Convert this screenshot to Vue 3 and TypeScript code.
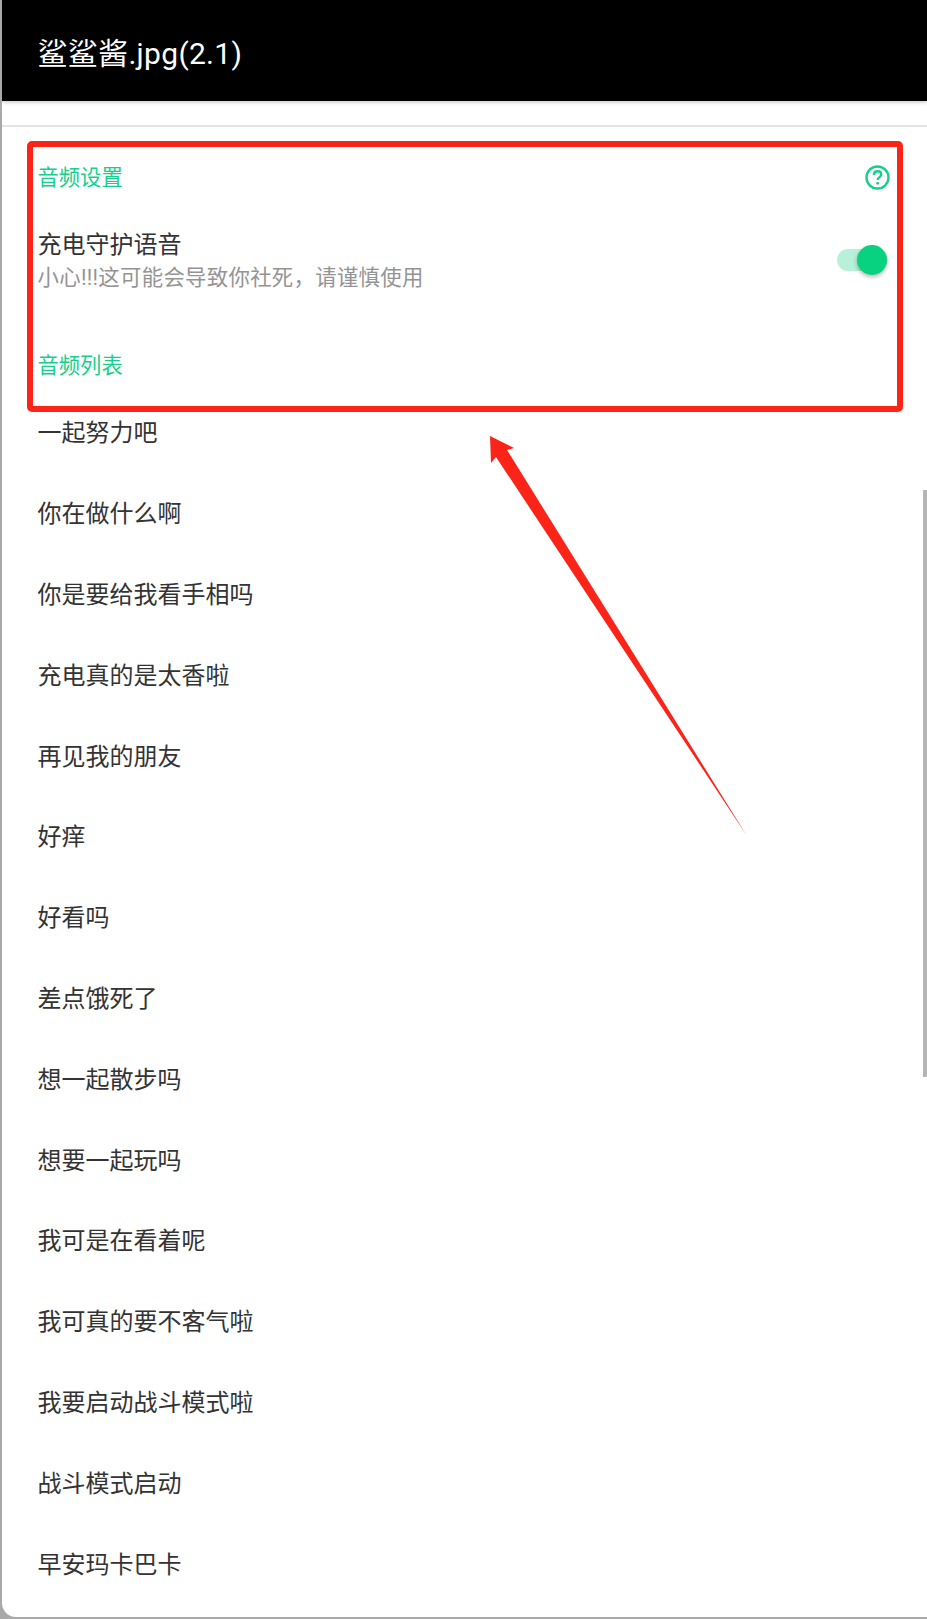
<template>
  <div class="window">
    <header class="app-bar">
      <h1 class="app-title">鲨鲨酱.jpg(2.1)</h1>
    </header>
    <div class="tab-gap" />

    <main class="content">
      <section class="settings">
        <div class="section-head">
          <span class="section-title">音频设置</span>
          <svg class="help" viewBox="0 0 25 25" aria-hidden="true">
            <circle cx="12.5" cy="12.5" r="11" />
            <path d="M8.9 10c0-2.2 1.6-3.7 3.7-3.7s3.6 1.4 3.6 3.2c0 2.7-3.5 2.7-3.5 5.6" />
            <circle class="dot" cx="12.7" cy="18.3" r="1.4" />
          </svg>
        </div>
        <div class="switch-row">
          <div class="switch-text">
            <div class="switch-title">充电守护语音</div>
            <div class="switch-sub">小心!!!这可能会导致你社死，请谨慎使用</div>
          </div>
          <div class="switch">
            <span class="thumb" />
          </div>
        </div>
        <div class="list-head">
          <span class="section-title">音频列表</span>
        </div>
      </section>

      <ul class="audio-list">
        <li v-for="item in audios" :key="item" class="audio-item">{{ item }}</li>
      </ul>
    </main>

    <div class="scrollbar" />
    <div class="highlight" />
    <svg class="arrow" viewBox="0 0 927 1619" aria-hidden="true">
      <polygon points="490,436 514,448 507,450 747,836 496,457 491,463" />
    </svg>
  </div>
</template>

<script setup lang="ts">
const audios: string[] = [
  '一起努力吧',
  '你在做什么啊',
  '你是要给我看手相吗',
  '充电真的是太香啦',
  '再见我的朋友',
  '好痒',
  '好看吗',
  '差点饿死了',
  '想一起散步吗',
  '想要一起玩吗',
  '我可是在看着呢',
  '我可真的要不客气啦',
  '我要启动战斗模式啦',
  '战斗模式启动',
  '早安玛卡巴卡',
]
</script>

<style>
html,
body {
  margin: 0;
  background: #a9a9a9;
}
</style>

<style scoped>
.window {
  position: relative;
  width: 925px;
  height: 1617px;
  margin-left: 2px;
  overflow: hidden;
  background: #fff;
  border-bottom-left-radius: 14px;
  font-family: Roboto, 'Noto Sans CJK SC', sans-serif;
  color: #333;
}

.app-bar {
  display: flex;
  align-items: center;
  height: 101px;
  padding-left: 35.5px;
  background: #000;
  box-shadow: 0 1px 4px rgba(0, 0, 0, 0.25);
}

.app-title {
  margin: 0;
  font-size: 30px;
  font-weight: 400;
  letter-spacing: 0.3px;
  color: #fff;
}

.tab-gap {
  height: 24px;
  border-bottom: 2px solid #e4e4e4;
}

.section-head {
  display: flex;
  align-items: center;
  justify-content: space-between;
  height: 102px;
  padding: 0 37px 0 35.5px;
  box-sizing: border-box;
}

.section-title {
  font-size: 21.3px;
  line-height: 28px;
  color: #17cf8a;
}

.help {
  width: 25px;
  height: 25px;
  margin-bottom: 2px;
  fill: none;
  stroke: #17cf8a;
  stroke-width: 2.4;
}

.help .dot {
  fill: #17cf8a;
  stroke: none;
}

.switch-row {
  display: flex;
  align-items: center;
  justify-content: space-between;
  height: 64px;
  padding: 0 38px 0 35.5px;
}

.switch-title {
  font-size: 24px;
  line-height: 32px;
}

.switch-sub {
  font-size: 21.4px;
  line-height: 33px;
  letter-spacing: 0.3px;
  color: #949494;
}

.switch {
  position: relative;
  width: 50px;
  height: 22px;
  margin: 0 2px 2px 0;
  border-radius: 11px;
  background: #b9f0d9;
}

.thumb {
  position: absolute;
  top: -4px;
  right: 0;
  width: 30px;
  height: 30px;
  border-radius: 50%;
  background: #08d27f;
  box-shadow: 0 2px 4px rgba(0, 0, 0, 0.3);
}

.list-head {
  display: flex;
  align-items: center;
  height: 49.5px;
  margin-top: 48px;
  padding-left: 35.5px;
}

.audio-list {
  margin: 0;
  padding: 0;
  list-style: none;
}

.audio-item {
  display: flex;
  align-items: center;
  height: 80.8px;
  padding-left: 35.5px;
  font-size: 24px;
}

.scrollbar {
  position: absolute;
  top: 490px;
  right: 0;
  width: 4px;
  height: 587px;
  background: #b5b5b5;
}

.highlight {
  position: absolute;
  top: 141px;
  left: 25px;
  width: 876px;
  height: 271px;
  box-sizing: border-box;
  border: 6px solid #fb2418;
  border-radius: 5px;
}

.arrow {
  position: absolute;
  top: 0;
  left: -2px;
  width: 927px;
  height: 1619px;
  fill: #fb2418;
}
</style>
